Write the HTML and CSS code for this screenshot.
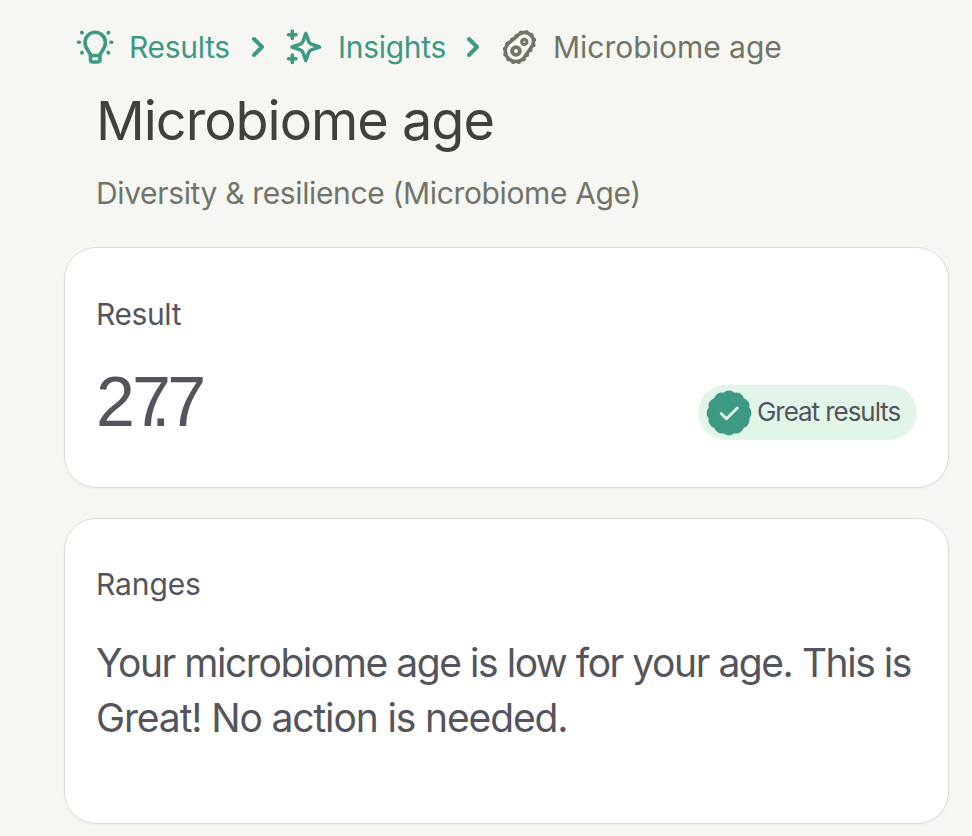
FILE: index.html
```
<!DOCTYPE html>
<html lang="en">
<head>
    <meta charset="UTF-8">
    <meta name="viewport" content="width=device-width, initial-scale=1.0">
    <title>Microbiome age</title>
    <link rel="stylesheet" href="styles.css">
</head>
<body>

    <!-- Breadcrumb -->
    <nav class="breadcrumb">
        <a class="crumb" href="#">
            <svg class="crumb-icon" viewBox="0 0 38 38" fill="none" stroke="currentColor" stroke-width="3.6" stroke-linecap="round" stroke-linejoin="round">
                <path d="M14.5 27.5C14.5 23.5 9 22 9 14.5A10.2 10.2 0 0 1 29.4 14.5C29.4 22 24 23.5 24 27.5Z"/>
                <path d="M14.5 27.5V31.5Q14.5 34 17 34H21.5Q24 34 24 31.5V27.5"/>
                <path d="M2.5 14.3H3.3M35 14.3H35.8M5.7 4.5L6.2 4.9M32.6 4.5L32.1 4.9M5.7 24.9L6.2 24.5M32.6 24.9L32.1 24.5"/>
            </svg>
            <span class="crumb-text results-text">Results</span>
        </a>
        <svg class="chevron" viewBox="0 0 14 22" fill="none" stroke="currentColor" stroke-width="4" stroke-linecap="round" stroke-linejoin="round">
            <path d="M3 3L11 11L3 19"/>
        </svg>
        <a class="crumb" href="#">
            <svg class="crumb-icon" viewBox="0 0 38 38" fill="none" stroke="currentColor" stroke-width="3.6" stroke-linecap="round" stroke-linejoin="round">
                <path d="M20.8 5.5L23.7 13.5Q24.4 15.4 26.3 16.1L34.5 19L26.3 21.9Q24.4 22.6 23.7 24.5L20.8 32.5L17.9 24.5Q17.2 22.6 15.3 21.9L7 19L15.3 16.1Q17.2 15.4 17.9 13.5Z"/>
                <path d="M7.3 3V10.5M3.5 6.8H11M7.3 27V34.5M3.5 30.8H11"/>
            </svg>
            <span class="crumb-text insights-text">Insights</span>
        </a>
        <svg class="chevron" viewBox="0 0 14 22" fill="none" stroke="currentColor" stroke-width="4" stroke-linecap="round" stroke-linejoin="round">
            <path d="M3 3L11 11L3 19"/>
        </svg>
        <span class="crumb current">
            <svg class="crumb-icon" viewBox="0 0 38 38" fill="none" stroke="currentColor" stroke-width="3.6">
                <path d="M8.1 15.6L17.8 7.4A8.8 8.8 0 0 1 31.1 19.7L23.8 30.1A10.5 10.5 0 1 1 8.1 15.6Z"/>
                <path stroke-width="3.6" stroke-linecap="round" stroke-dasharray="0.1 5.65" d="M7.5 15.2L17.2 7A9.6 9.6 0 0 1 32 20.3L24.6 30.8A11.4 11.4 0 1 1 7.5 15.2Z"/>
                <circle cx="16" cy="23" r="3.9" stroke-width="3.8"/>
                <circle cx="24.3" cy="13.9" r="2.6" stroke-width="3.2"/>
            </svg>
            <span class="crumb-text current-text">Microbiome age</span>
        </span>
    </nav>

    <!-- Page heading -->
    <header class="heading">
        <h1>Microbiome age</h1>
        <p>Diversity &amp; resilience (Microbiome Age)</p>
    </header>

    <!-- Cards -->
    <main class="cards">
        <section class="card result-card">
            <h2 class="result-label">Result</h2>
            <div class="result-row">
                <span class="value">2<span class="tight">7</span>.7</span>
                <span class="badge">
                    <svg class="seal" viewBox="-23 -23 46 46">
                        <path fill="currentColor" d="M5.43 -20.28A8 8 0 0 1 14.85 -14.85A8 8 0 0 1 20.28 -5.43A8 8 0 0 1 20.28 5.43A8 8 0 0 1 14.85 14.85A8 8 0 0 1 5.43 20.28A8 8 0 0 1 -5.43 20.28A8 8 0 0 1 -14.85 14.85A8 8 0 0 1 -20.28 5.43A8 8 0 0 1 -20.28 -5.43A8 8 0 0 1 -14.85 -14.85A8 8 0 0 1 -5.43 -20.28A8 8 0 0 1 5.43 -20.28Z"/>
                        <path fill="none" stroke="#e2f5e9" stroke-width="2.8" stroke-linecap="round" stroke-linejoin="round" d="M-7.8 0.5L-2.5 5.8L8.3 -5"/>
                    </svg>
                    <span class="badge-text">Great results</span>
                </span>
            </div>
        </section>

        <section class="card ranges-card">
            <h2 class="ranges-label">Ranges</h2>
            <p class="message"><span class="line-one">Your microbiome age is low for your age. This is</span><br>Great! No action is needed.</p>
        </section>
    </main>

</body>
</html>
```
FILE: styles.css
```
/* General Styles */
body {
    margin: 0;
    padding: 27px 23px 12px 64px;
    background-color: #f6f7f2;
    color: #54545c;
    font-family: Inter, "Liberation Sans", sans-serif;
    white-space: nowrap;
}

h1, h2, p {
    margin: 0;
    font-weight: 400;
}

/* Breadcrumb */
.breadcrumb {
    display: flex;
    align-items: center;
    height: 40px;
    padding-left: 12px;
    color: #3d9983;
    font-size: 30px;
    line-height: 40px;
}

.crumb {
    display: flex;
    align-items: center;
    gap: 15px;
    color: inherit;
    text-decoration: none;
}

.crumb-icon {
    width: 38px;
    height: 38px;
    flex: none;
}

.crumb-text {
    letter-spacing: -0.3px;
}

.results-text {
    width: 101px;
}

.insights-text {
    width: 107px;
}

.chevron {
    width: 14px;
    height: 22px;
    margin: 0 20px 0 21px;
    flex: none;
}

.current {
    color: #72746a;
}

.current-text {
    letter-spacing: 0;
}

/* Page heading */
.heading {
    padding-left: 32px;
}

.heading h1 {
    height: 106px;
    color: #404239;
    font-size: 54px;
    line-height: 108px;
    letter-spacing: -1px;
}

.heading p {
    height: 40px;
    color: #72746a;
    font-size: 30px;
    line-height: 40px;
    letter-spacing: -0.36px;
}

/* Cards */
.cards {
    display: flex;
    flex-direction: column;
    gap: 30px;
    padding-top: 34px;
}

.card {
    box-sizing: border-box;
    padding: 46px 31px 0;
    border: 1px solid #dcddd9;
    border-radius: 32px;
    background: white;
    box-shadow: 0 1px 3px rgba(0, 0, 0, 0.04);
}

.card h2 {
    height: 40px;
    font-size: 30px;
    line-height: 40px;
}

.card .result-label {
    letter-spacing: -0.4px;
}

.card .ranges-label {
    letter-spacing: -0.1px;
}

.result-card {
    height: 241px;
}

.ranges-card {
    height: 306px;
    padding-top: 45px;
}

.result-row {
    display: flex;
    align-items: flex-end;
    justify-content: space-between;
    padding-top: 26px;
}

.value {
    font-family: "Liberation Sans", sans-serif;
    font-size: 70px;
    height: 78px;
    line-height: 80px;
    letter-spacing: -3px;
}

.tight {
    letter-spacing: -20px;
}

.badge {
    display: flex;
    align-items: center;
    gap: 5px;
    box-sizing: border-box;
    width: 219px;
    height: 55px;
    margin-top: 25px;
    padding-left: 8px;
    border-radius: 28px;
    background: #e2f5e9;
}

.seal {
    width: 46px;
    height: 46px;
    flex: none;
    color: #3d9983;
}

.badge-text {
    padding-bottom: 2px;
    font-size: 26px;
    letter-spacing: -1.05px;
}

.message {
    padding-top: 31px;
    font-size: 39px;
    line-height: 55px;
    letter-spacing: -1.13px;
}

.line-one {
    letter-spacing: -1.45px;
}
```
